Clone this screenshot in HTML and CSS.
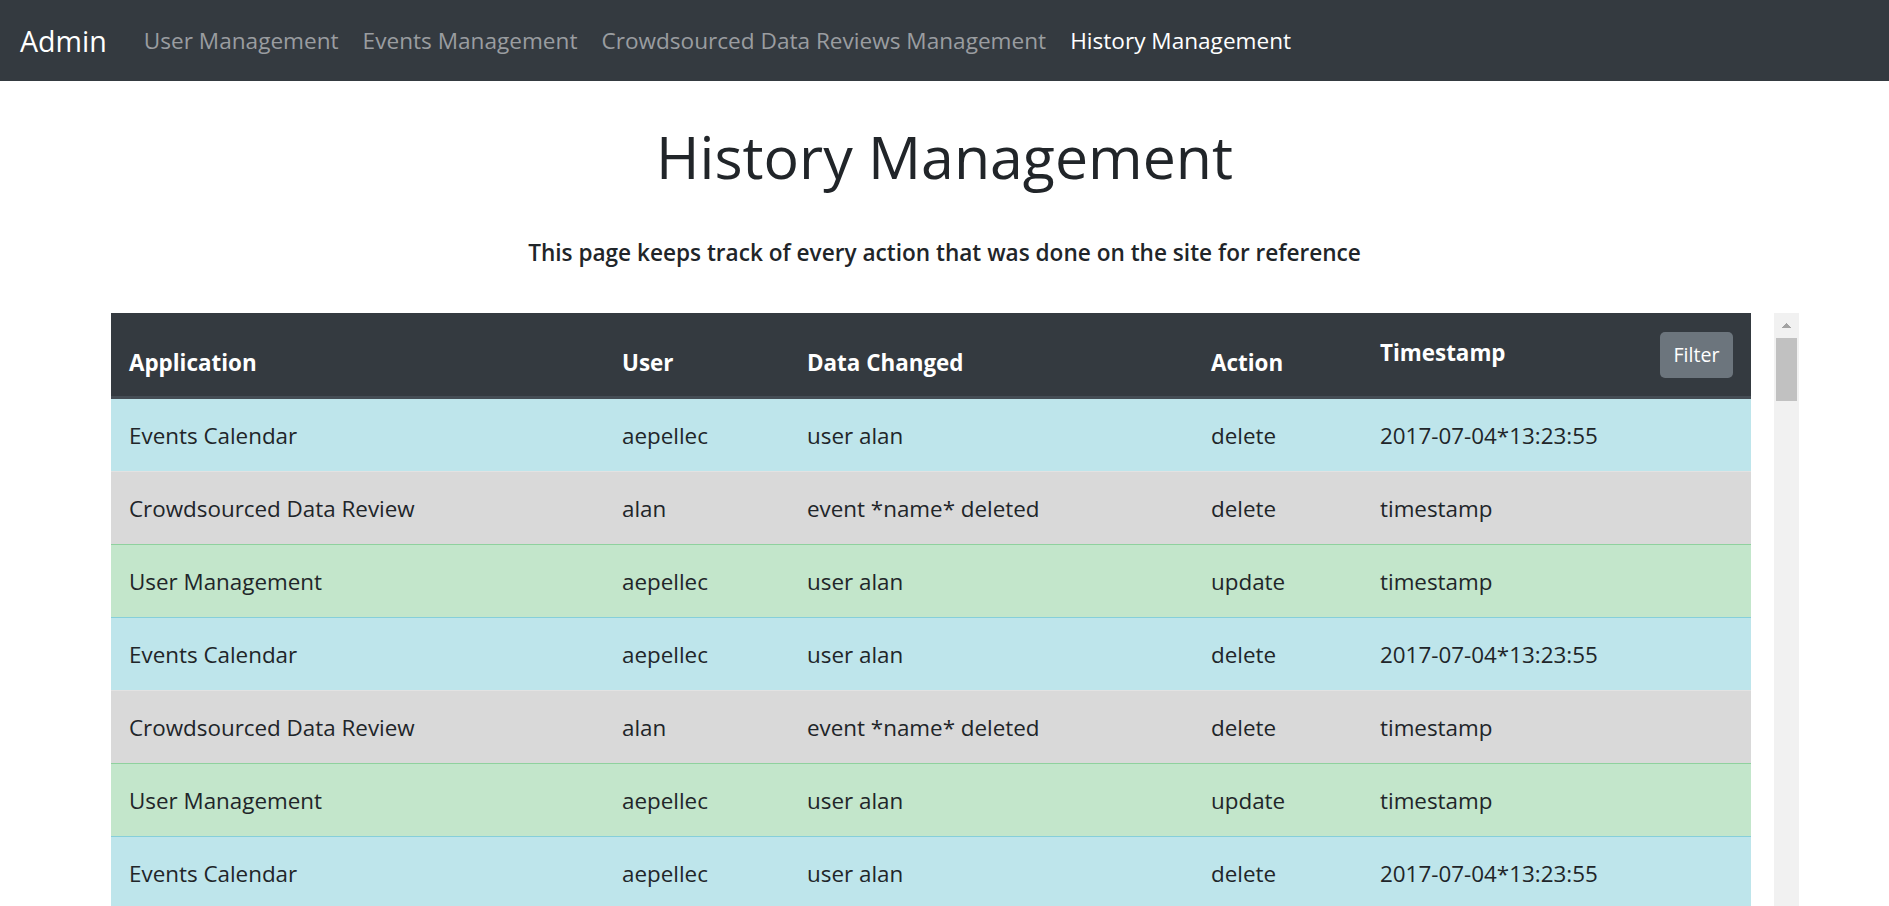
FILE: index.html
```html
<!DOCTYPE html>
<html lang="en">
<head>
<meta charset="utf-8">
<title>History Management</title>
<link rel="stylesheet" href="styles.css">
</head>
<body>
<nav class="navbar">
  <a class="brand" href="#">Admin</a>
  <ul class="nav-links">
    <li><a class="nav-link" href="#">User Management</a></li>
    <li><a class="nav-link" href="#">Events Management</a></li>
    <li><a class="nav-link" href="#">Crowdsourced Data Reviews Management</a></li>
    <li><a class="nav-link active" href="#">History Management</a></li>
  </ul>
</nav>
<main class="page">
  <h1 class="page-title">History Management</h1>
  <p class="page-lead">This page keeps track of every action that was done on the site for reference</p>
  <div class="table-area">
    <div class="table-viewport">
      <table class="history-table">
        <colgroup>
          <col class="col-app"><col class="col-user"><col class="col-data"><col class="col-action"><col class="col-time">
        </colgroup>
        <thead>
          <tr><th>Application</th><th>User</th><th>Data Changed</th><th>Action</th><th><button class="btn-filter" type="button">Filter</button><span class="th-top">Timestamp</span></th></tr>
        </thead>
        <tbody>
          <tr class="row-info"><td>Events Calendar</td><td>aepellec</td><td>user alan</td><td>delete</td><td>2017-07-04*13:23:55</td></tr>
          <tr class="row-gray"><td>Crowdsourced Data Review</td><td>alan</td><td>event *name* deleted</td><td>delete</td><td>timestamp</td></tr>
          <tr class="row-success"><td>User Management</td><td>aepellec</td><td>user alan</td><td>update</td><td>timestamp</td></tr>
          <tr class="row-info"><td>Events Calendar</td><td>aepellec</td><td>user alan</td><td>delete</td><td>2017-07-04*13:23:55</td></tr>
          <tr class="row-gray"><td>Crowdsourced Data Review</td><td>alan</td><td>event *name* deleted</td><td>delete</td><td>timestamp</td></tr>
          <tr class="row-success"><td>User Management</td><td>aepellec</td><td>user alan</td><td>update</td><td>timestamp</td></tr>
          <tr class="row-info"><td>Events Calendar</td><td>aepellec</td><td>user alan</td><td>delete</td><td>2017-07-04*13:23:55</td></tr>
        </tbody>
      </table>
    </div>
    <div class="scrollbar" aria-hidden="true">
      <span class="scroll-arrow"></span>
      <span class="scroll-thumb"></span>
    </div>
  </div>
</main>
</body>
</html>
```

FILE: styles.css
```css
html {
  overflow: hidden;
}

body {
  margin: 0;
  font-family: "Open Sans", "Noto Sans", sans-serif;
  color: #212529;
  background: #ffffff;
}

.navbar {
  height: 81px;
  background: #343a40;
  display: flex;
  align-items: center;
  padding-left: 20px;
}

.brand {
  color: #ffffff;
  text-decoration: none;
  font-size: 28.6px;
  line-height: 40px;
  margin-right: 25px;
}

.nav-links {
  list-style: none;
  margin: 0;
  padding: 0;
  display: flex;
}

.nav-link {
  display: block;
  padding: 0 12px;
  font-size: 22.6px;
  line-height: 36px;
  color: #9a9da0;
  text-decoration: none;
}

.nav-link.active {
  color: #ffffff;
}

.page {
  display: flex;
  flex-direction: column;
}

.page-title {
  margin: 40px 0 0;
  text-align: center;
  font-size: 59px;
  line-height: 70px;
  font-weight: 500;
}

.page-lead {
  margin: 45px 0 0;
  text-align: center;
  font-size: 22.6px;
  line-height: 34px;
  font-weight: 600;
}

.table-area {
  display: flex;
  gap: 23px;
  margin: 43px 0 0 111px;
  height: 593px;
}

.table-viewport {
  width: 1640px;
  overflow: hidden;
}

.scrollbar {
  width: 25px;
  background: #f1f1f1;
  display: flex;
  flex-direction: column;
}

.scroll-arrow {
  display: block;
  height: 25px;
  background-image:
    linear-gradient(to bottom right, transparent 50%, #a3a3a3 50%),
    linear-gradient(to bottom left, transparent 50%, #a3a3a3 50%);
  background-size: 5px 5px, 5px 5px;
  background-position: 7px 10px, 12px 10px;
  background-repeat: no-repeat;
}

.scroll-thumb {
  display: block;
  height: 63px;
  margin: 0 2px;
  background: #c1c1c1;
}

.history-table {
  width: 1640px;
  table-layout: fixed;
  border-collapse: separate;
  border-spacing: 0;
  font-size: 22.4px;
  line-height: 36px;
}

.col-app { width: 493px; }
.col-user { width: 185px; }
.col-data { width: 404px; }
.col-action { width: 169px; }
.col-time { width: 389px; }

.history-table th {
  height: 50px;
  background: #343a40;
  color: #ffffff;
  font-weight: 700;
  text-align: left;
  vertical-align: bottom;
  padding: 18px 18px 15px;
  border-bottom: 3px solid #454d55;
  white-space: nowrap;
}

.th-top {
  display: inline-block;
  margin-top: 4px;
}

.history-table th:last-child {
  vertical-align: top;
}

.history-table td {
  padding: 19px 18px 17px;
  vertical-align: top;
  text-align: left;
  white-space: nowrap;
  border-top: 1px solid transparent;
}

.history-table tbody tr:first-child td {
  border-top: 0;
}

.btn-filter {
  float: right;
  width: 73px;
  height: 46px;
  margin-top: 1px;
  border: 0;
  border-radius: 5px;
  background: #6c757d;
  color: #ffffff;
  font-family: "Open Sans", "Noto Sans", sans-serif;
  font-size: 19.6px;
  line-height: 46px;
  padding: 0;
  text-align: center;
}

.row-info td {
  background: #bee5eb;
  border-top-color: #86cfda;
}

.row-gray td {
  background: #d9d9d9;
  border-top-color: #e2e2e2;
}

.row-success td {
  background: #c3e6cb;
  border-top-color: #8fd19e;
}
```
